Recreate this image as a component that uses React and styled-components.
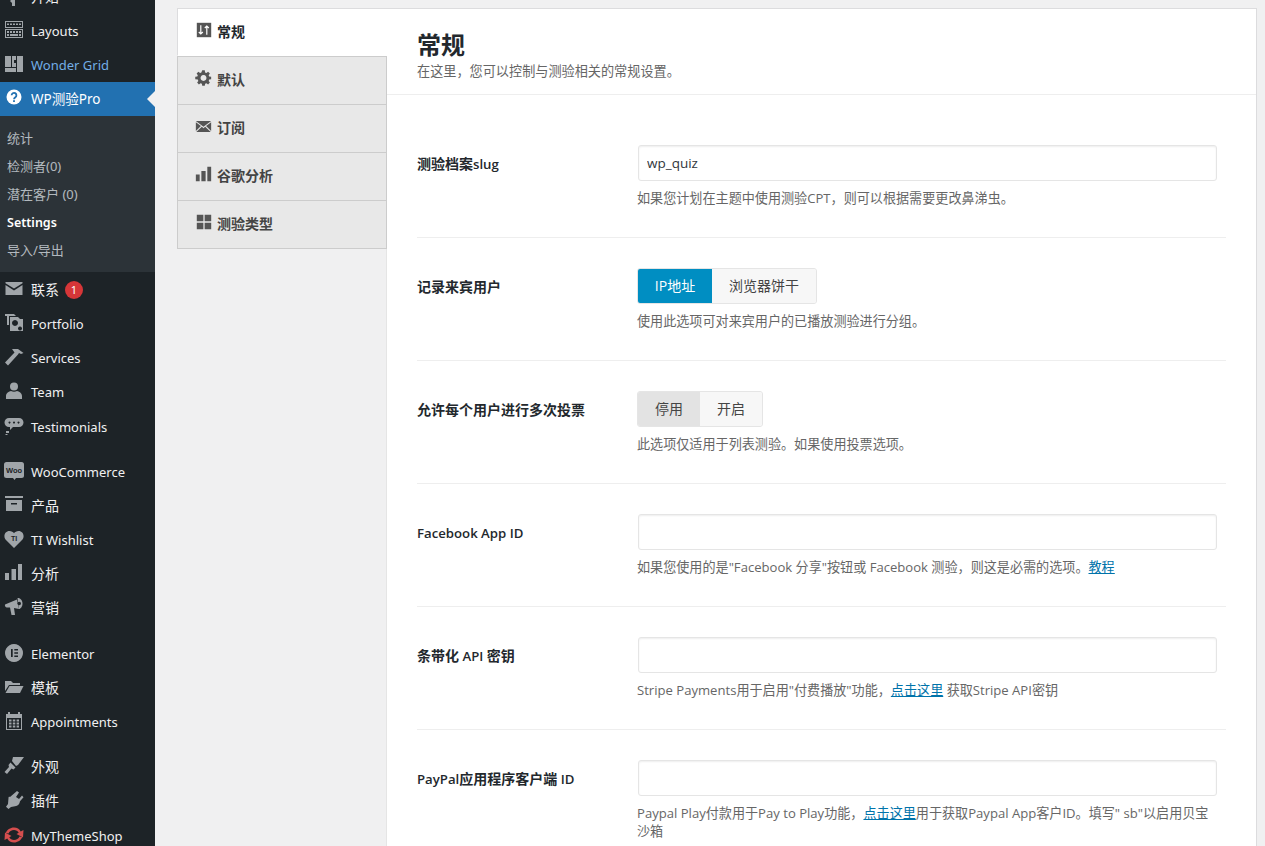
import styled, { createGlobalStyle } from "styled-components";

const GlobalStyle = createGlobalStyle`
  html, body {
    margin: 0;
    height: 846px;
    overflow: hidden;
    background: #f0f0f1;
    font-family: "Open Sans", "Noto Sans CJK SC", sans-serif;
  }
  * { box-sizing: border-box; }
`;

const Page = styled.div`
  display: flex;
  height: 846px;
  overflow: hidden;
`;

const Sidebar = styled.nav`
  width: 155px;
  flex: none;
  height: 846px;
  overflow: hidden;
  background: #1d2327;
`;

const MenuList = styled.div`
  margin-top: -20px;
  display: flex;
  flex-direction: column;
`;

const MenuItem = styled.div`
  position: relative;
  display: flex;
  align-items: center;
  height: 34px;
  flex: none;
  padding-left: 4px;
  margin-top: ${props => props.$gap || 0}px;
  background: ${props => (props.$current ? "#2271b1" : "transparent")};
  color: ${props => props.$color || "#f0f0f1"};
  font-family: "Noto Sans", "Noto Sans CJK SC", sans-serif;
  font-size: ${props => props.$size || 13}px;
  line-height: 20px;

  ${props => props.$current && `
    &::after {
      content: "";
      position: absolute;
      right: 0;
      top: 9px;
      border: 8px solid transparent;
      border-right-color: #f0f0f1;
      border-left-width: 0;
    }
  `}
`;

const MenuIcon = styled.span`
  width: 27px;
  flex: none;
  display: flex;
  margin-top: -3px;
  color: ${props => props.$color || "#a0a5a9"};
`;

const Badge = styled.span`
  width: 18px;
  height: 18px;
  margin-left: 6px;
  border-radius: 50%;
  background: #d63638;
  color: #fff;
  font-size: 11px;
  display: flex;
  align-items: center;
  justify-content: center;
`;

const SubMenu = styled.div`
  background: #2c3338;
  padding: 8px 0;
  height: 156px;
  flex: none;
`;

const SubItem = styled.div`
  height: 28px;
  display: flex;
  align-items: center;
  padding-left: 7px;
  padding-top: ${props => (props.$active ? 2 : 0)}px;
  font-family: "Noto Sans", "Noto Sans CJK SC", sans-serif;
  font-size: ${props => (props.$active ? 12.5 : 13)}px;
  line-height: 20px;
  color: ${props => (props.$active ? "#fff" : "rgba(240,246,252,.7)")};
  font-weight: ${props => (props.$active ? 600 : 400)};
`;

const Main = styled.main`
  flex: 1;
  padding: 8px 8px 0 22px;
`;

const Panel = styled.div`
  display: flex;
  height: 900px;
  border-top: 1px solid #dcdcde;
  border-right: 1px solid #dcdcde;
`;

const TabColumn = styled.div`
  width: 210px;
  flex: none;
  border-right: 1px solid #e5e5e5;
`;

const Tab = styled.div`
  display: flex;
  align-items: center;
  gap: 5px;
  padding-left: 17px;
  margin-right: -1px;
  background: ${props => (props.$active ? "#fff" : "#e8e8e8")};
  border-left: 1px solid ${props => (props.$active ? "#dcdcde" : "#ccc")};
  border-bottom: 1px solid ${props => (props.$active ? "#fff" : "#ccc")};
  border-right: 1px solid ${props => (props.$active ? "#fff" : "#ccc")};
  border-top: ${props => (props.$first ? "1px solid #ccc" : "0")};
  height: ${props => (props.$first ? "49px" : props.$active ? "47px" : "48px")};
  font-size: 14px;
  line-height: 20px;
  font-weight: 700;
  color: ${props => (props.$active ? "#23282d" : "#444")};
`;

const TabIcon = styled.span`
  display: flex;
  justify-content: center;
  width: 17px;
  flex: none;
  margin-top: -5px;
  color: #555;
`;

const TabLabel = styled.span`
  margin-top: ${props => (props.$first ? 0 : -1)}px;
`;

const Content = styled.div`
  flex: 1;
  background: #fff;
  min-width: 0;
`;

const Header = styled.header`
  height: 86px;
  padding: 20px 30px 0;
  border-bottom: 1px solid #eee;
`;

const Title = styled.h1`
  margin: 0 0 1px;
  font-size: 24px;
  line-height: 31px;
  font-weight: 700;
  color: #23282d;
`;

const Subtitle = styled.p`
  margin: 0;
  font-size: 13.15px;
  line-height: 20px;
  color: #666;
`;

const Form = styled.div`
  padding: 0 30px;
`;

const Row = styled.div`
  display: flex;
  height: ${props => props.$height || 123}px;
  padding-top: ${props => props.$top || 30}px;
  border-bottom: 1px solid #eee;

  &:last-child {
    border-bottom: 0;
  }
`;

const Label = styled.label`
  width: 220px;
  flex: none;
  padding-top: 10px;
  font-size: 14px;
  line-height: 18px;
  font-weight: 700;
  color: #23282d;
`;

const Latin = styled.span`
  font-size: 13.2px;
  font-weight: 600;
`;

const Control = styled.div`
  width: 580px;
`;

const TextInput = styled.input`
  display: block;
  width: 579px;
  height: 36px;
  margin-left: 1px;
  padding: 0 8px;
  border: 1px solid #e5e5e5;
  border-radius: 3px;
  box-shadow: inset 0 1px 2px rgba(0, 0, 0, .07);
  background: #fff;
  font-family: inherit;
  font-size: 13.5px;
  color: #32373c;
`;

const Switch = styled.div`
  display: flex;
  width: max-content;
  height: 36px;
  border: 1px solid #e5e5e5;
  border-radius: 3px;
  overflow: hidden;
  background: #f7f7f7;
`;

const SwitchOption = styled.span`
  display: flex;
  align-items: center;
  justify-content: center;
  width: ${props => props.$width}px;
  background: ${props => props.$bg || "#f7f7f7"};
  color: ${props => props.$color || "#444"};
  font-size: 14px;
  line-height: 20px;
`;

const Help = styled.p`
  margin: 8px 0 0;
  font-size: 13.1px;
  line-height: 18px;
  color: #666;
`;

const HelpLink = styled.a`
  color: #0073aa;
  text-decoration: underline;
`;

const I = ({ children, size = 20 }) => (
  <svg width={size} height={size} viewBox="0 0 20 20" fill="currentColor">
    {children}
  </svg>
);

const icons = {
  start: (
    <I>
      <path d="M6 15l3-3 2 2v6H8v-3z" />
    </I>
  ),
  layouts: (
    <I>
      <path d="M1 1h18v7H1zm1 1v5h16V2zM1 9h18v9H1zm1 1v7h16v-7z" fillRule="evenodd" />
      <path d="M3 3.500h2V5H3zm3 0h2V5H6zm3 0h2V5H9zm3 0h2V5h-2zm3 0h2V5h-2zM3 11h2v2H3zm3 0h2v2H6zm3 0h2v2H9zm3 0h2v2h-2zm3 0h2v2h-2zM3 14h2v2H3zm3 0h8v2H6zm9 0h2v2h-2z" />
    </I>
  ),
  grid: (
    <I>
      <path d="M1 2h6v11H1zM8 2h4v4H10v3h2v4H8zM13 2h6v16H13zM1 14h11v4H1z" />
    </I>
  ),
  quiz: (
    <I>
      <circle cx="10" cy="9" r="7.500" />
      <path d="M7.600 7.200a2.400 2.400 0 1 1 3.800 2c-1 .7-1.400 1-1.400 2" fill="none" stroke="#2271b1" strokeWidth="1.800" />
      <rect x="9.100" y="12.200" width="1.800" height="1.800" fill="#2271b1" />
    </I>
  ),
  mail: (
    <I>
      <path d="M1.500 3h17v1.200L10 9.500 1.500 4.200zM1.500 6l8.500 5.500L18.500 6v10h-17z" />
    </I>
  ),
  portfolio: (
    <I>
      <path d="M1 1h9l2 2H5v9H3V3H1zM6 4h8l2 2h3v12H6zm5 3a3 3 0 1 0 .01 0zm5 6.500a2 2 0 1 0 .01 0z" fillRule="evenodd" />
    </I>
  ),
  hammer: (
    <I>
      <path d="M8 2h6l5.500 4-2.500 1-2-1-1 1.500L4 18.500 1 15.500 10.500 5.500z" />
    </I>
  ),
  team: (
    <I>
      <circle cx="10" cy="5.500" r="4" />
      <path d="M2 18v-3c0-3 3-4.500 5-5 1.500 1 4.500 1 6 0 2 .5 5 2 5 5v3z" />
    </I>
  ),
  testimonials: (
    <I>
      <path d="M5 1h10c2.500 0 4.500 2 4.500 4.500S17.500 10 15 10H9l-3 3v-3H5C2.500 10 .5 8 .5 5.500S2.500 1 5 1zm.5 3.500a1 1 0 1 0 .01 0zm4.500 0a1 1 0 1 0 .01 0zm4.500 0a1 1 0 1 0 .01 0z" fillRule="evenodd" transform="translate(0 1)" />
      <path d="M2 15h3v2H2zM1.500 18h2v1h-2z" />
    </I>
  ),
  woo: (
    <I>
      <rect x="0" y="1" width="20" height="16" rx="2.500" />
      <path d="M9 17h3l-1.500 2z" />
      <text x="10" y="12" textAnchor="middle" fontSize="7.500" fontWeight="700" fill="#1d2327" fontFamily="Liberation Sans, sans-serif">Woo</text>
    </I>
  ),
  archive: (
    <I>
      <path d="M1 1h18v2H1zM2 5h16v11H2zm5 3v1.500h6V8z" fillRule="evenodd" />
    </I>
  ),
  heart: (
    <I>
      <path d="M10 19 1.500 10.500C-1 7 1 2 5.500 2 7.500 2 9 3 10 4.200 11 3 12.500 2 14.500 2 19 2 21 7 18.500 10.500z" />
      <text x="10" y="12" textAnchor="middle" fontSize="7" fontWeight="700" fill="#1d2327" fontFamily="Liberation Sans, sans-serif">TI</text>
    </I>
  ),
  bars: (
    <I>
      <path d="M1 10h4v7H1zM7.500 6h4.500v11H7.500zM14 1h4v16h-4z" />
    </I>
  ),
  megaphone: (
    <I>
      <path d="M1 7.500 13 2.500 15 12 10 11l1 7H7.500L6 10.500H3C1.500 10.500 .5 9 1 7.500z" />
      <path d="M14 1c2.500 0 4.500 2.500 4.500 5.500S16.500 12 15 12l-1.500-11z" fillRule="evenodd" />
      <circle cx="15.200" cy="6.500" r="1.800" fill="#1d2327" />
    </I>
  ),
  elementor: (
    <I>
      <path d="M10 1a9 9 0 1 0 .01 0zM7 6h1.700v8H7zm3.300 0H14v1.600h-3.700zm0 3.200H14v1.600h-3.700zm0 3.200H14V14h-3.700z" fillRule="evenodd" />
    </I>
  ),
  folder: (
    <I>
      <path d="M1 4h6l2 2h7v2H5L1 14z" />
      <path d="M5.500 9H19.500L16 16H1.500z" />
    </I>
  ),
  calendar: (
    <I>
      <path d="M2 3h2V1h2v2h8V1h2v2h2v16H2zm1 4v11h14V7z" fillRule="evenodd" />
      <path d="M5 8.500h2.500v2H5zm3.800 0h2.500v2H8.800zm3.800 0H15v2h-2.400zM5 11.500h2.500v2H5zm3.800 0h2.500v2H8.800zm3.800 0H15v2h-2.400zM5 14.500h2.500v2H5zm3.800 0h2.500v2H8.800zm3.800 0H15v2h-2.400z" />
    </I>
  ),
  brush: (
    <I>
      <path d="M9 1h11l-6 8-2 1-4-5zM6.500 6.500l5 5-2 2-2-1L3 18l-2.500-2 4.500-5-.5-2z" />
    </I>
  ),
  plug: (
    <I>
      <path d="M13 1l2 1.500-3 4.500 3 2 3-3.500 1.500 1.800-3.500 4c-.5 3-2 4.500-5 5l-4 .7-2.500 2-2.500-2.200L4 14l.5-6c0-1 .5-1.500 1.500-1z" />
    </I>
  ),
  mts: (
    <I>
      <path d="M10 2.500c3 0 5.500 1.500 6.700 4L19.500 5l-.5 7.500-6.500-3.500 2.200-1.200C13.800 6 12 5 10 5c-2.500 0-4.600 1.500-5.500 3.500L1.800 8C3 4.800 6.200 2.500 10 2.500z" />
      <path d="M10 17.500c-3 0-5.500-1.500-6.700-4L.5 15 1 7.500 7.500 11l-2.200 1.200C6.200 14 8 15 10 15c2.500 0 4.600-1.500 5.500-3.500l2.700.5c-1.200 3.200-4.400 5.500-8.200 5.500z" />
    </I>
  ),
};

const tabIcons = {
  sliders: (
    <I size={16}>
      <rect x="1" y="1" width="18" height="18" />
      <path d="M6 4v11M3.500 12.500 6 15l2.500-2.500M13.500 16V5M11 7.500 13.500 5 16 7.500" fill="none" stroke="#fff" strokeWidth="1.500" />
    </I>
  ),
  gear: (
    <I size={18}>
      <path d="M8.500 1h3l.4 2.400 1.500.6 2-1.400 2.100 2.100-1.400 2 .6 1.500 2.300.3v3l-2.300.4-.6 1.500 1.400 2-2.100 2.100-2-1.400-1.500.6-.4 2.300h-3l-.4-2.300-1.500-.6-2 1.400-2.100-2.100 1.400-2-.6-1.500L.3 11.500v-3l2.400-.3.6-1.500-1.400-2 2.100-2.100 2 1.400 1.500-.6zM10 6.500a3.500 3.500 0 1 0 .01 0z" fillRule="evenodd" />
    </I>
  ),
  envelope: (
    <I size={18}>
      <path d="M1 4h18L10 11zM1 5.500V16l6-6zM19 5.500V16l-6-6zM1.500 17l6.500-6 2 1.500 2-1.500 6.500 6z" />
    </I>
  ),
  bars: (
    <I size={17}>
      <path d="M1 10h4.500v8H1zM7.500 6h5v12h-5zM14.500 1H19v17h-4.500z" />
    </I>
  ),
  squares: (
    <I size={16}>
      <path d="M1 1h8.200v8.200H1zM10.800 1H19v8.200h-8.200zM1 10.800h8.200V19H1zM10.800 10.800H19V19h-8.200z" />
    </I>
  ),
};

const topMenu = [
  { text: "开始", icon: "start", size: 14 },
  { text: "Layouts", icon: "layouts" },
  { text: "Wonder Grid", icon: "grid", color: "#72aee6" },
];

const bottomMenu = [
  { text: "联系", icon: "mail", badge: "1", size: 14, gap: 1 },
  { text: "Portfolio", icon: "portfolio" },
  { text: "Services", icon: "hammer" },
  { text: "Team", icon: "team" },
  { text: "Testimonials", icon: "testimonials", gap: 1 },
  { text: "WooCommerce", icon: "woo", gap: 11 },
  { text: "产品", icon: "archive", size: 14 },
  { text: "TI Wishlist", icon: "heart" },
  { text: "分析", icon: "bars", size: 14 },
  { text: "营销", icon: "megaphone", size: 14 },
  { text: "Elementor", icon: "elementor", gap: 12 },
  { text: "模板", icon: "folder", size: 14 },
  { text: "Appointments", icon: "calendar" },
  { text: "外观", icon: "brush", gap: 11, size: 14 },
  { text: "插件", icon: "plug", size: 14 },
  { text: "MyThemeShop", icon: "mts", iconColor: "#d54e4e", gap: 1 },
];

const subMenu = ["统计", "检测者(0)", "潜在客户 (0)", "Settings", "导入/导出"];

const tabs = [
  { text: "常规", icon: "sliders" },
  { text: "默认", icon: "gear" },
  { text: "订阅", icon: "envelope" },
  { text: "谷歌分析", icon: "bars" },
  { text: "测验类型", icon: "squares" },
];

function SideItem({ item }) {
  return (
    <MenuItem $gap={item.gap} $color={item.color} $size={item.size}>
      <MenuIcon $color={item.iconColor}>{icons[item.icon]}</MenuIcon>
      {item.text}
      {item.badge && <Badge>{item.badge}</Badge>}
    </MenuItem>
  );
}

function App() {
  return (
    <Page>
      <GlobalStyle />
      <Sidebar>
        <MenuList>
          {topMenu.map(item => (
            <SideItem key={item.text} item={item} />
          ))}
          <MenuItem $current $color="#fff" $size={13.5}>
            <MenuIcon $color="#fff">{icons.quiz}</MenuIcon>
            WP测验Pro
          </MenuItem>
          <SubMenu>
            {subMenu.map(text => (
              <SubItem key={text} $active={text === "Settings"}>{text}</SubItem>
            ))}
          </SubMenu>
          {bottomMenu.map(item => (
            <SideItem key={item.text} item={item} />
          ))}
        </MenuList>
      </Sidebar>
      <Main>
        <Panel>
          <TabColumn>
            {tabs.map((tab, i) => (
              <Tab key={tab.text} $active={i === 0} $first={i === 1}>
                <TabIcon>{tabIcons[tab.icon]}</TabIcon>
                <TabLabel $first={i === 0}>{tab.text}</TabLabel>
              </Tab>
            ))}
          </TabColumn>
          <Content>
            <Header>
              <Title>常规</Title>
              <Subtitle>在这里，您可以控制与测验相关的常规设置。</Subtitle>
            </Header>
            <Form>
              <Row $height={143} $top={50}>
                <Label>测验档案<Latin>slug</Latin></Label>
                <Control>
                  <TextInput defaultValue="wp_quiz" />
                  <Help>如果您计划在主题中使用测验CPT，则可以根据需要更改鼻涕虫。</Help>
                </Control>
              </Row>
              <Row>
                <Label>记录来宾用户</Label>
                <Control>
                  <Switch>
                    <SwitchOption $width={74} $bg="#008ec2" $color="#fff">IP地址</SwitchOption>
                    <SwitchOption $width={104}>浏览器饼干</SwitchOption>
                  </Switch>
                  <Help>使用此选项可对来宾用户的已播放测验进行分组。</Help>
                </Control>
              </Row>
              <Row>
                <Label>允许每个用户进行多次投票</Label>
                <Control>
                  <Switch>
                    <SwitchOption $width={62} $bg="#e3e3e3">停用</SwitchOption>
                    <SwitchOption $width={62}>开启</SwitchOption>
                  </Switch>
                  <Help>此选项仅适用于列表测验。如果使用投票选项。</Help>
                </Control>
              </Row>
              <Row>
                <Label><Latin>Facebook App ID</Latin></Label>
                <Control>
                  <TextInput />
                  <Help>如果您使用的是"Facebook 分享"按钮或 Facebook 测验，则这是必需的选项。<HelpLink>教程</HelpLink></Help>
                </Control>
              </Row>
              <Row>
                <Label>条带化<Latin> API </Latin>密钥</Label>
                <Control>
                  <TextInput />
                  <Help>Stripe Payments用于启用"付费播放"功能，<HelpLink>点击这里</HelpLink> 获取Stripe API密钥</Help>
                </Control>
              </Row>
              <Row>
                <Label><Latin>PayPal</Latin>应用程序客户端<Latin> ID</Latin></Label>
                <Control>
                  <TextInput />
                  <Help>Paypal Play付款用于Pay to Play功能，<HelpLink>点击这里</HelpLink>用于获取Paypal App客户ID。填写" sb"以启用贝宝沙箱</Help>
                </Control>
              </Row>
            </Form>
          </Content>
        </Panel>
      </Main>
    </Page>
  );
}

export default App;
